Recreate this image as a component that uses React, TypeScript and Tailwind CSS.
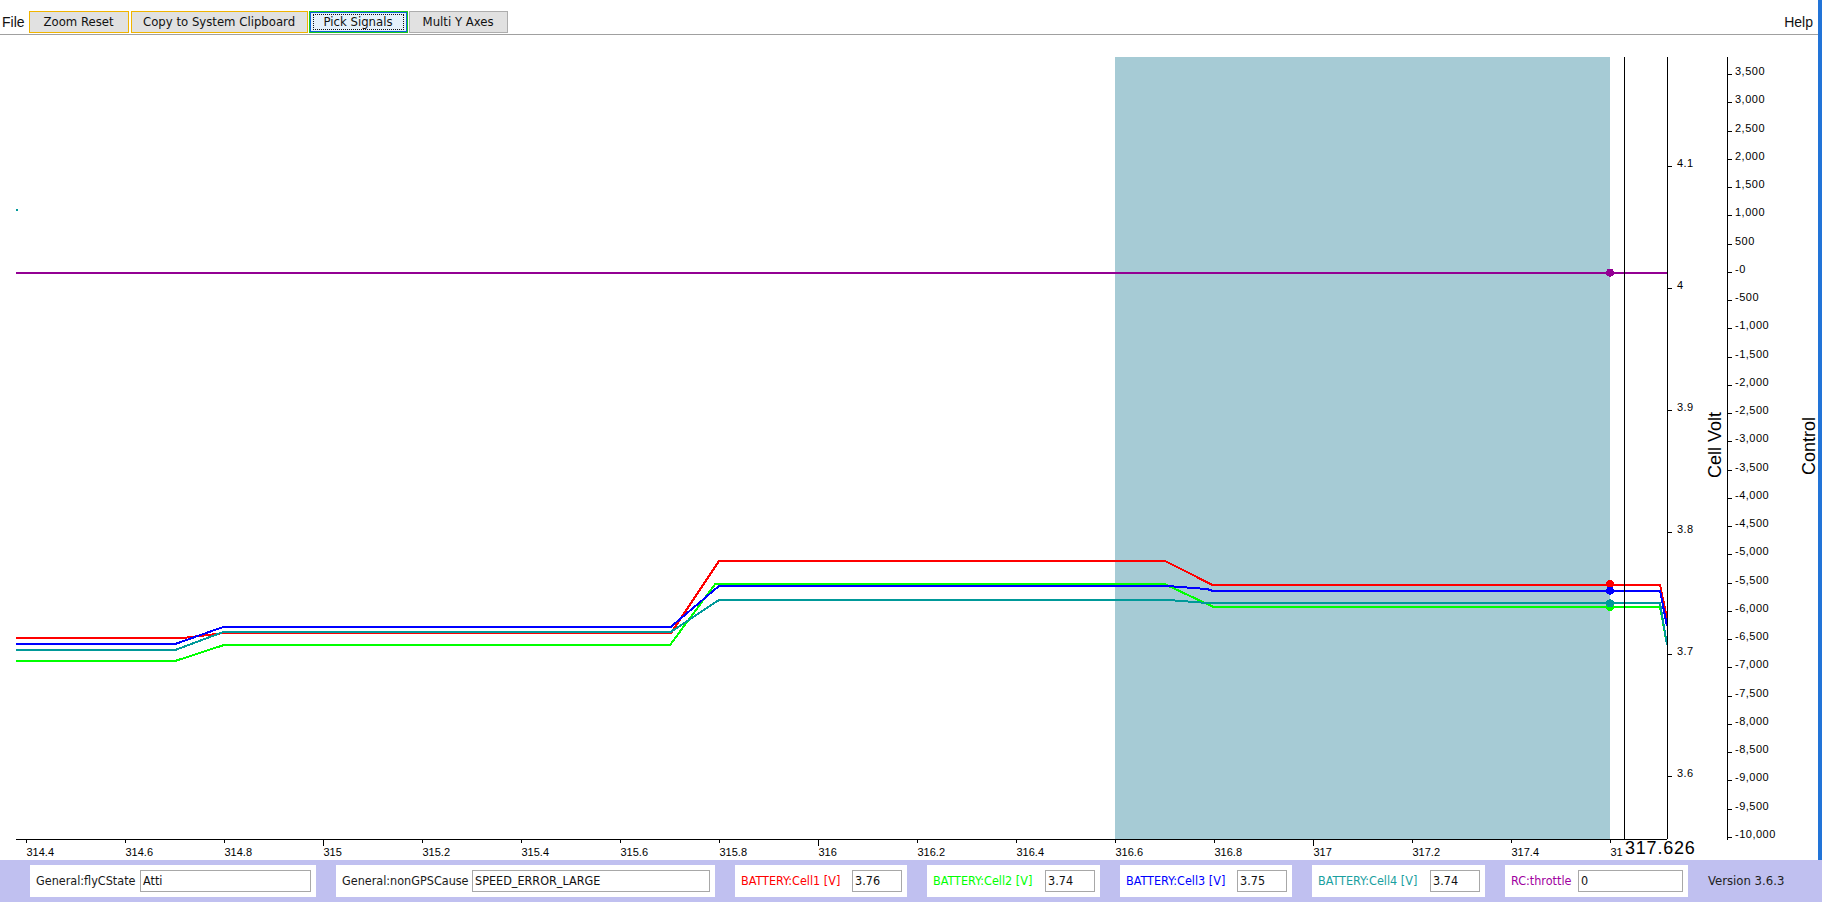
import React from "react";

// plot mapping, page coordinates
const tx = (t: number) => 25.7 + (t - 314.4) * 495;
const vy = (v: number) => 166 + (4.1 - v) * 1220;

const xTicks = Array.from({ length: 17 }, (_, i) => Math.round((314.4 + i * 0.2) * 10) / 10);
const voltTicks = [4.1, 4.0, 3.9, 3.8, 3.7, 3.6];
const ctrlTicks = Array.from({ length: 28 }, (_, i) => 3500 - i * 500);

const series = [
  { color: "#ff0000", pts: [[16, 638], [183, 638], [224, 633], [671, 633], [719, 561], [1165, 561], [1212, 584.7], [1660, 584.7], [1667, 618]] },
  { color: "#00ff00", pts: [[16, 660.7], [176, 660.7], [224, 645], [670, 645], [715, 584.3], [1165, 584.3], [1213, 606.7], [1660, 606.7], [1667, 645]] },
  { color: "#0000ff", pts: [[16, 643.7], [176, 643.7], [224, 626.7], [671, 626.7], [719, 586], [1167, 586], [1207, 589], [1212, 590.7], [1660, 590.7], [1667, 626]] },
  { color: "#009999", pts: [[16, 649.7], [176, 649.7], [224, 631.7], [671, 631.7], [719, 600], [1168, 600], [1212, 603.3], [1660, 603.3], [1667, 645]] },
];

const dots = [
  { color: "#ff0000", y: 584 },
  { color: "#00ff00", y: 607 },
  { color: "#0000ff", y: 590.7 },
  { color: "#009999", y: 603.3 },
  { color: "#930093", y: 272.7 },
];

const fields = [
  { label: "General:flyCState", value: "Atti", color: "text-[#1a1a1a]", w: "w-[286px]", iw: "w-[171px]" },
  { label: "General:nonGPSCause", value: "SPEED_ERROR_LARGE", color: "text-[#1a1a1a]", w: "w-[379px]", iw: "w-[238px]" },
  { label: "BATTERY:Cell1 [V]", value: "3.76", color: "text-[#ff0000]", w: "w-[172px]", iw: "w-[50px]" },
  { label: "BATTERY:Cell2 [V]", value: "3.74", color: "text-[#00ff00]", w: "w-[173px]", iw: "w-[50px]" },
  { label: "BATTERY:Cell3 [V]", value: "3.75", color: "text-[#0000ff]", w: "w-[172px]", iw: "w-[50px]" },
  { label: "BATTERY:Cell4 [V]", value: "3.74", color: "text-[#1aa0a0]", w: "w-[173px]", iw: "w-[50px]" },
  { label: "RC:throttle", value: "0", color: "text-[#a000a0]", w: "w-[183px]", iw: "w-[105px]" },
];

function Chart() {
  const axisFont = { fontFamily: "'Liberation Sans', Arial, sans-serif", fontSize: 11 };
  return (
    <svg width={1818} height={825} viewBox="0 35 1818 825" className="block" shapeRendering="crispEdges">
      {/* selection */}
      <rect x={1115} y={57} width={495} height={782} fill="#a6cbd5" />

      {/* purple throttle */}
      <line x1={16} y1={272.7} x2={1667} y2={272.7} stroke="#930093" strokeWidth={2} />
      <rect x={16} y={209} width={2} height={2} fill="#009999" />

      {series.map((s) => (
        <polyline key={s.color} points={s.pts.map((p) => p.join(",")).join(" ")} fill="none" stroke={s.color} strokeWidth={2} />
      ))}

      {dots.map((d) => (
        <circle key={d.color} cx={1610} cy={d.y} r={4} fill={d.color} />
      ))}

      {/* cursor */}
      <line x1={1624.5} y1={57} x2={1624.5} y2={839} stroke="#000" strokeWidth={1} />

      {/* x axis */}
      <line x1={16} y1={839.5} x2={1667} y2={839.5} stroke="#000" strokeWidth={1} />
      {xTicks.map((t, i) => {
        const x = Math.round(tx(t)) + 0.5;
        const major = Number.isInteger(t);
        // last label is hidden under the cursor readout, only "31" shows
        const label = i === xTicks.length - 1 ? "31" : String(t);
        return (
          <g key={t}>
            <line x1={x} y1={840} x2={x} y2={major ? 846 : 843} stroke="#000" strokeWidth={1} />
            <text x={x} y={856} {...axisFont} fill="#000">{label}</text>
          </g>
        );
      })}
      <text x={1625} y={854} fontFamily="'Liberation Sans', Arial, sans-serif" fontSize={18} letterSpacing={0.8} fill="#000">317.626</text>

      {/* cell volt axis */}
      <line x1={1667.5} y1={57} x2={1667.5} y2={839} stroke="#000" strokeWidth={1} />
      {voltTicks.map((v) => {
        const y = Math.round(vy(v)) + 0.5;
        return (
          <g key={v}>
            <line x1={1668} y1={y} x2={1672} y2={y} stroke="#000" strokeWidth={1} />
            <text x={1677} y={y} {...axisFont} letterSpacing={0.4} fill="#000">{v === 4 ? "4" : v.toFixed(1)}</text>
          </g>
        );
      })}
      <text transform="translate(1721 445) rotate(-90)" textAnchor="middle" fontFamily="'Liberation Sans', Arial, sans-serif" fontSize={18} fill="#000">Cell Volt</text>

      {/* control axis */}
      <line x1={1727.5} y1={57} x2={1727.5} y2={840} stroke="#000" strokeWidth={1} />
      {ctrlTicks.map((n, i) => {
        const y = Math.round(74 + i * 28.25) + 0.5;
        return (
          <g key={n}>
            <line x1={1728} y1={y} x2={1732} y2={y} stroke="#000" strokeWidth={1} />
            <text x={1735} y={y} {...axisFont} letterSpacing={0.5} fill="#000">{n === 0 ? "-0" : n.toLocaleString("en-US")}</text>
          </g>
        );
      })}
      <text transform="translate(1815 446) rotate(-90)" textAnchor="middle" fontFamily="'Liberation Sans', Arial, sans-serif" fontSize={18} fill="#000">Control</text>
    </svg>
  );
}

export default function App() {
  return (
    <div className="w-[1822px] h-[902px] bg-white overflow-hidden font-['DejaVu_Sans_Condensed','DejaVu_Sans',sans-serif] font-stretch-condensed text-[13px] text-[#111]">
      <div className="border-r-[4px] border-[#2274d8]">
        {/* toolbar */}
        <div className="flex items-end h-[35px] border-b border-[#a0a0a0]">
          <span className="ml-[2px] mb-[1px] h-[22px] flex items-center font-['Liberation_Sans',sans-serif] font-stretch-normal text-[14px] text-[#111]">File</span>
          <div className="flex ml-[4px] mb-[1px] h-[22px]">
            <button className="w-[100px] h-full bg-[#e1e1e1] border border-[#f0b400] text-[#111]">Zoom Reset</button>
            <button className="ml-[2px] w-[177px] h-full bg-[#e1e1e1] border border-[#f0b400] text-[#111]">Copy to System Clipboard</button>
            <button className="ml-[1px] w-[99px] h-full bg-[#e5f1fb] border border-[#18c818] p-0 text-[#111]">
              <span className="flex h-full w-full items-center justify-center border border-[#0a64d8]">
                <span className="flex h-[16px] w-[91px] items-center justify-center border border-dotted border-[#111]">Pick Signals</span>
              </span>
            </button>
            <button className="ml-[1px] w-[99px] h-full bg-[#e1e1e1] border border-[#adadad] text-[#111]">Multi Y Axes</button>
          </div>
          <span className="ml-auto mr-[5px] mb-[1px] h-[22px] flex items-center font-['Liberation_Sans',sans-serif] font-stretch-normal text-[14px] text-[#111]">Help</span>
        </div>
        <Chart />
      </div>

      {/* status bar */}
      <div className="flex items-center h-[42px] bg-[#c0c0f0] pl-[30px] gap-[20px] text-[12.5px]">
        {fields.map((f) => (
          <div key={f.label} className={`${f.w} h-[32px] bg-white flex items-center justify-between pl-[6px] pr-[5px]`}>
            <span className={`${f.color} whitespace-nowrap`}>{f.label}</span>
            <div className={`${f.iw} h-[22px] border border-[#a8a8a8] flex items-center pl-[2px] text-[#111]`}>{f.value}</div>
          </div>
        ))}
        <span className="text-[#222] text-[13px]">Version 3.6.3</span>
      </div>
    </div>
  );
}
